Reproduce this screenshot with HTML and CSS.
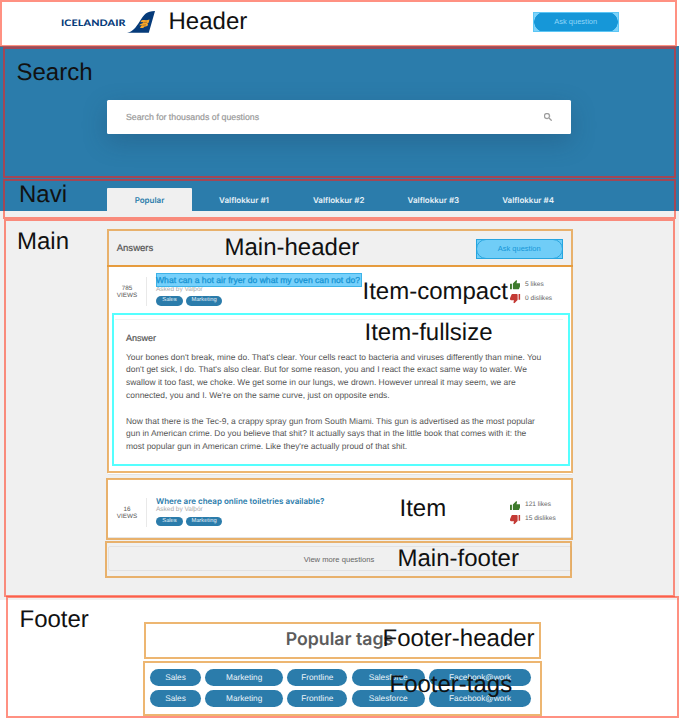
FILE: index.html
```html
<!DOCTYPE html>
<html lang="en">
<head>
<meta charset="utf-8">
<title>Icelandair questions</title>
<link rel="stylesheet" href="styles.css">
</head>
<body>
<svg class="defs" width="0" height="0" aria-hidden="true">
  <symbol id="thumb" viewBox="1 1 22 20">
    <path d="M1 21h4V9H1v12zm22-11c0-1.1-.9-2-2-2h-6.31l.95-4.57.03-.32c0-.41-.17-.79-.44-1.06L14.17 1 7.59 7.59C7.22 7.95 7 8.45 7 9v10c0 1.1.9 2 2 2h9c.83 0 1.54-.5 1.84-1.22l3.02-7.05c.09-.23.14-.47.14-.73v-2z"/>
  </symbol>
</svg>

<header class="header">
  <div class="brand">
    <div class="brand-name"><span>ICELANDAIR</span></div>
    <svg class="brand-mark" viewBox="0 0 28 22">
      <path fill="#063b7a" d="M0 21.8C6 20.5 8.500 17 13 10 17 3.500 19.500 0 28 0L21.800 21.800Z"/>
      <path fill="#f6a72b" d="M13.500 10.500C16 7.500 18 10.500 22.500 8.500L21.800 11.200C21.300 12.500 20 12.200 19.500 12.500 21 12.500 21.200 13 20.800 14.300 20.300 16 17.500 14.800 16.300 17L13 17C13.500 15.500 14.500 14.500 15.500 14.300L12.300 14.300C13 12.500 15.500 12.700 16.500 11.500 15.500 11 14.500 11.500 13.500 10.500Z"/>
      <path fill="none" stroke="#9b6420" stroke-width=".7" d="M16.500 11.500L20 11.200M15.500 14.300L19 13.800"/>
    </svg>
  </div>
  <button class="ask ask-solid">Ask question</button>
</header>

<section class="search">
  <div class="search-box">
    <span>Search for thousands of questions</span>
    <svg viewBox="3 3 17.500 17.500" width="8" height="8"><path fill="#999" stroke="#999" stroke-width=".8" d="M15.500 14h-.79l-.28-.27A6.470 6.470 0 0 0 16 9.500 6.500 6.500 0 1 0 9.500 16c1.610 0 3.090-.59 4.230-1.570l.27.28v.79l5 4.990L20.490 19l-4.990-5zm-6 0C7.010 14 5 11.990 5 9.500S7.010 5 9.500 5 14 7.010 14 9.500 11.990 14 9.500 14z"/></svg>
  </div>
</section>

<nav class="navi">
  <a class="tab active">Popular</a>
  <a class="tab">Valflokkur #1</a>
  <a class="tab">Valflokkur #2</a>
  <a class="tab">Valflokkur #3</a>
  <a class="tab">Valflokkur #4</a>
</nav>

<main class="main">
  <div class="main-header">
    <h2>Answers</h2>
    <button class="ask ask-outline">Ask question</button>
  </div>

  <article class="card card-full">
    <div class="item">
      <div class="views">785<br>VIEWS</div>
      <div class="question">
        <h3><span class="selected">What can a hot air fryer do what my oven can not do?</span></h3>
        <p class="author">Asked by Valþór</p>
        <div class="chips"><span class="chip sales">Sales</span><span class="chip marketing">Marketing</span></div>
      </div>
      <div class="votes">
        <div><svg class="up"><use href="#thumb"/></svg>5 likes</div>
        <div><svg class="down"><use href="#thumb"/></svg>0 dislikes</div>
      </div>
    </div>
    <div class="answer">
      <h4>Answer</h4>
      <p>Your bones don't break, mine do. That's clear. Your cells react to bacteria and viruses differently than mine. You<br>don't get sick, I do. That's also clear. But for some reason, you and I react the exact same way to water. We<br>swallow it too fast, we choke. We get some in our lungs, we drown. However unreal it may seem, we are<br>connected, you and I. We're on the same curve, just on opposite ends.</p>
      <p>Now that there is the Tec-9, a crappy spray gun from South Miami. This gun is advertised as the most popular<br>gun in American crime. Do you believe that shit? It actually says that in the little book that comes with it: the<br>most popular gun in American crime. Like they're actually proud of that shit.</p>
    </div>
  </article>

  <article class="card card-short">
    <div class="item">
      <div class="views">16<br>VIEWS</div>
      <div class="question">
        <h3>Where are cheap online toiletries available?</h3>
        <p class="author">Asked by Valþór</p>
        <div class="chips"><span class="chip sales">Sales</span><span class="chip marketing">Marketing</span></div>
      </div>
      <div class="votes">
        <div><svg class="up"><use href="#thumb"/></svg>121 likes</div>
        <div><svg class="down"><use href="#thumb"/></svg>15 dislikes</div>
      </div>
    </div>
  </article>

  <button class="more">View more questions</button>
</main>

<footer class="footer">
  <h2>Popular tags</h2>
  <div class="tags">
    <span>Sales</span><span>Marketing</span><span>Frontline</span><span>Salesforce</span><span>Facebook@work</span>
    <span>Sales</span><span>Marketing</span><span>Frontline</span><span>Salesforce</span><span>Facebook@work</span>
  </div>
</footer>

<div class="notes">
  <div class="box red n-header"></div>
  <div class="box dark n-search"></div>
  <div class="box dark n-navi"></div>
  <div class="box red n-navi-end"></div>
  <div class="box red n-main"></div>
  <div class="box red n-footer"></div>
  <div class="box orange n-main-header"></div>
  <div class="box orange n-item-open"></div>
  <div class="box cyan n-item-full"></div>
  <div class="box orange n-item"></div>
  <div class="box orange n-main-footer"></div>
  <div class="box orange n-footer-header"></div>
  <div class="box orange n-footer-tags"></div>
  <span class="label l-header">Header</span>
  <span class="label l-search">Search</span>
  <span class="label l-navi">Navi</span>
  <span class="label l-main">Main</span>
  <span class="label l-main-header">Main-header</span>
  <span class="label l-compact">Item-compact</span>
  <span class="label l-fullsize">Item-fullsize</span>
  <span class="label l-item">Item</span>
  <span class="label l-main-footer">Main-footer</span>
  <span class="label l-footer">Footer</span>
  <span class="label l-footer-header">Footer-header</span>
  <span class="label l-footer-tags">Footer-tags</span>
</div>
</body>
</html>
```
FILE: styles.css
```css
* { box-sizing: border-box; }
body {
  margin: 0;
  position: relative;
  width: 679px;
  height: 720px;
  overflow: hidden;
  background: #fff;
  color: #555;
  font-family: "Liberation Sans", Arial, sans-serif;
  text-rendering: geometricPrecision;
  white-space: nowrap;
}
h2, h3, h4, p { margin: 0; }
button { font-family: inherit; padding: 0; }
.defs { position: absolute; }

.header {
  height: 46px;
  padding: 0 60px 0 61px;
  display: flex;
  align-items: flex-start;
  justify-content: space-between;
}
.brand { display: flex; padding-top: 11px; }
.brand-name { width: 66px; padding-top: 6px; line-height: 12px; font-size: 8px; }
.brand-name span {
  display: inline-block;
  font: 900 9px/12px Lato, sans-serif;
  letter-spacing: .1px;
  color: #063b7a;
  transform: scaleX(1.19);
  transform-origin: 0 50%;
}
.brand-mark { width: 28px; height: 22px; }
.ask {
  width: 86.500px;
  height: 20px;
  font-size: 7.510px;
  line-height: 18px;
  border: 1px solid;
}
.ask-solid {
  margin-top: 12px;
  color: #8fd6f8;
  border-color: #5cc6f5;
  background: radial-gradient(circle at 10px 9px, #1697d8 9.500px, transparent 10px) 0 0 / 10px 18px no-repeat,
    radial-gradient(circle at 0 9px, #1697d8 9.500px, transparent 10px) 100% 0 / 10px 18px no-repeat,
    linear-gradient(#1697d8, #1697d8) 10px 0 / 64.500px 18px no-repeat,
    #7dd3fa;
}

.search {
  height: 133px;
  padding: 54px 108px 0 107px;
  background: #2b7cab;
}
.search-box {
  height: 33.500px;
  padding: 1px 19px 0;
  display: flex;
  align-items: center;
  justify-content: space-between;
  border-radius: 1.500px;
  background: #fff;
  box-shadow: 0 8px 24px rgba(30, 60, 90, .27);
  color: #999;
  font-size: 8.780px;
  -webkit-text-stroke: .2px #999;
}

.navi {
  height: 32px;
  padding: 8.500px 0 0 107px;
  display: flex;
  background: #2b7cab;
  font-family: Inter, sans-serif;
  font-size: 8px;
  font-weight: 600;
  line-height: 25px;
  text-align: center;
  color: #e8f2f8;
}
.tab { width: 94.700px; }
.tab.active {
  width: 85px;
  margin-right: 4.700px;
  border-radius: 1px 1px 0 0;
  background: #f0f0f0;
  color: #2b7cab;
}

.main {
  height: 388.500px;
  padding: 19px 107.500px 0 108px;
  background: #f0f0f0;
}
.main-header {
  height: 36px;
  padding: 9px 9px 0 8.700px;
  display: flex;
  justify-content: space-between;
}
.main-header h2 {
  font-size: 9.550px;
  font-weight: 400;
  line-height: 20px;
  color: #555;
  -webkit-text-stroke: .2px #555;
}
.ask-outline {
  position: relative;
  color: #1797d8;
  border-color: #24a5df;
  background: #70cdf7;
}
.ask-outline::after {
  content: "";
  position: absolute;
  inset: -1px;
  border: 1px solid #28a5df;
  border-radius: 10px;
}

.card { background: #fff; border-bottom: 1px solid #e5e5e5; }
.card-full { height: 209px; padding-top: 7px; margin-bottom: 4px; }
.card-short { height: 59px; padding-top: 14.500px; margin-bottom: 8px; }
.item { display: flex; height: 45px; }
.views {
  width: 39px;
  height: 29px;
  margin-top: 4px;
  padding: 8px 0 0;
  border-right: 1px solid #e9e9e9;
  font-size: 6.300px;
  line-height: 7.200px;
  text-align: center;
  color: #555;
}
.question { flex: 1; padding-left: 9px; }
.question h3 {
  position: relative;
  z-index: 1;
  height: 11.500px;
  font-family: Inter, sans-serif;
  font-size: 8.030px;
  font-weight: 600;
  line-height: 15px;
  color: #2b7cab;
}
.selected {
  display: block;
  width: 205.500px;
  height: 14px;
  background: #76d0fb;
  box-shadow: inset 0 0 0 1px #3db3e8;
  color: #1492d2;
  font-family: "Liberation Sans", Arial, sans-serif;
  font-size: 8.600px;
  font-weight: 400;
  -webkit-text-stroke: .25px #1492d2;
}
.author { height: 11.800px; font-size: 6.490px; line-height: 9px; color: #aaa; }
.chips { display: flex; gap: 3px; }
.chip {
  height: 9.300px;
  border-radius: 5px;
  background: #2b7cab;
  color: #e4f0f7;
  font-size: 5.750px;
  line-height: 9.600px;
  text-align: center;
}
.chip.sales { width: 27px; }
.chip.marketing { width: 36px; }
.votes { width: 62px; padding-top: 6px; font-size: 6.600px; line-height: 10px; color: #666; }
.votes div { display: flex; align-items: center; gap: 5px; height: 10.500px; padding-top: 1px; margin-bottom: 3.500px; }
.votes svg { width: 10.500px; height: 9.500px; }
.up { fill: #3d7a2c; }
.down { fill: #c43a35; transform: rotate(180deg); }

.answer {
  margin: 1px 9px 0 7px;
  padding: 11.500px 0 0 11px;
  border-top: 1px solid #f2f2f2;
  font-size: 8.460px;
  line-height: 12.800px;
}
.answer h4 {
  font-size: 9px;
  font-weight: 400;
  line-height: 12px;
  margin-bottom: 7.200px;
  -webkit-text-stroke: .2px #555;
}
.answer p { margin-bottom: 12.800px; }
.more {
  display: block;
  width: 464px;
  height: 25px;
  padding: 1px 2px 0 0;
  border: 1px solid #e2e2e2;
  border-radius: 2px;
  background: none;
  color: #666;
  font-size: 7.620px;
}

.footer { padding: 27px 144px 0; }
.footer h2 {
  height: 42.500px;
  font-family: Inter, sans-serif;
  font-size: 17.700px;
  font-weight: 600;
  line-height: 26px;
  text-align: center;
  color: #5c5c5c;
}
.tags {
  display: grid;
  grid-template-columns: 51px 77.500px 60px 73px 102px;
  column-gap: 4.400px;
  row-gap: 4px;
  padding-left: 6px;
}
.tags span {
  height: 17px;
  border-radius: 9px;
  background: #2b7cab;
  color: #e9f3f9;
  font-size: 8.250px;
  line-height: 17px;
  text-align: center;
}

/* Annotation layer over the page */
.notes { position: absolute; inset: 0; }
.box { position: absolute; border: 2px solid; }
.red { border-color: rgba(255, 62, 36, .57); }
.dark { border-color: rgba(220, 45, 45, .68); }
.orange { border-color: rgba(228, 143, 37, .65); }
.cyan { border-color: #5ff; }
.n-header { left: 0; top: 0; width: 677px; height: 47px; }
.n-search { left: 3px; top: 47px; width: 673px; height: 131px; }
.n-navi { left: 3px; top: 179px; width: 673px; height: 32px; border-bottom: 0; }
.n-navi-end { left: 3px; top: 211px; width: 673px; height: 8px; border-top: 0; }
.n-main { left: 4px; top: 219px; width: 671px; height: 378px; }
.n-footer { left: 6px; top: 596px; width: 673px; height: 122px; }
.n-main-header { left: 107px; top: 229px; width: 466px; height: 38px; }
.n-item-open { left: 107px; top: 265px; width: 466px; height: 208px; }
.n-item-full { left: 112px; top: 313px; width: 458px; height: 153px; }
.n-item { left: 106px; top: 478px; width: 467px; height: 62px; }
.n-main-footer { left: 105px; top: 541px; width: 467px; height: 37px; }
.n-footer-header { left: 144px; top: 622px; width: 397px; height: 37px; }
.n-footer-tags { left: 143px; top: 661px; width: 399px; height: 55px; }
.label {
  position: absolute;
  font: 24px/24px "Liberation Sans", Arial, sans-serif;
  color: #111;
}
.l-header { left: 168.500px; top: 10px; }
.l-search { left: 16.500px; top: 61px; }
.l-navi { left: 19px; top: 183px; }
.l-main { left: 17px; top: 230px; }
.l-main-header { left: 224.500px; top: 236px; }
.l-compact { left: 362.500px; top: 280px; }
.l-fullsize { left: 364.500px; top: 321px; }
.l-item { left: 399.500px; top: 497px; }
.l-main-footer { left: 397.500px; top: 547px; }
.l-footer { left: 19.500px; top: 608px; }
.l-footer-header { left: 382.500px; top: 627px; }
.l-footer-tags { left: 389.500px; top: 673px; }
```
